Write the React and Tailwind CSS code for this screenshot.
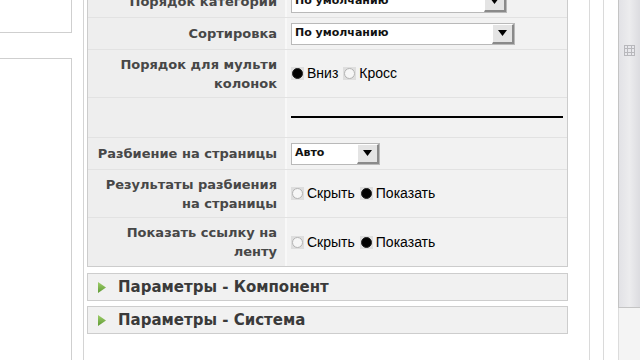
import React from 'react';

const labelFont = { fontFamily: '"DejaVu Sans", Verdana, sans-serif' };
const valueFont = { fontFamily: '"Liberation Sans", Arial, sans-serif' };

// old-style windows radio
const Radio = ({ checked }) => (
  <span className="w-[13px] h-[13px] bg-[#dedede] flex items-center justify-center shrink-0">
    <span
      className={`w-[11px] h-[11px] rounded-full border ${
        checked ? 'bg-black border-[#222]' : 'bg-[#f6f6f6] border-[#b4b4b4]'
      }`}
    />
  </span>
);

const RadioGroup = ({ options, value }) => (
  <div className="flex items-center text-[14px] text-black" style={valueFont}>
    {options.map((o, i) => (
      <div key={o} className={`flex items-center gap-[3px] ${i > 0 ? 'ml-[5px]' : ''}`}>
        <Radio checked={o === value} />
        <span>{o}</span>
      </div>
    ))}
  </div>
);

const Select = ({ value, width }) => (
  <div
    className="h-[22px] flex bg-white border border-[#b9b9b9]"
    style={{ width }}
  >
    <div
      className="flex-1 flex items-center pl-[3px] text-[11px] font-bold text-[#111]"
      style={labelFont}
    >
      {value}
    </div>
    <div className="w-[22px] bg-[#e4e4e4] border-t border-l border-white border-r-2 border-b-2 border-r-[#8a8a8a] border-b-[#8a8a8a] flex items-center justify-center">
      <svg width="9" height="6" viewBox="0 0 9 6">
        <path d="M0 0 H9 L4.5 6 Z" fill="#000" />
      </svg>
    </div>
  </div>
);

const Row = ({ label, height, last = false, children }) => (
  <div
    className={`grid grid-cols-[199px_1fr] ${last ? '' : 'border-b border-[#e2e2e2]'}`}
    style={{ height }}
  >
    <div
      className="bg-[#eeeeee] border-r-2 border-[#f8f8f8] flex items-center justify-end text-right pr-[8px] text-[13px] leading-[19px] font-bold text-[#474747]"
      style={labelFont}
    >
      <div>{label}</div>
    </div>
    <div className="bg-[#f2f2f2] flex items-center pl-[4px]">{children}</div>
  </div>
);

const SectionHeader = ({ title }) => (
  <div className="h-[28px] border border-[#cdcdcd] bg-[#f1f1f1] flex items-center pl-[10px] gap-[12px]">
    <svg width="8" height="11" viewBox="0 0 8 11">
      <defs>
        <linearGradient id="g" x1="0" y1="0" x2="0" y2="1">
          <stop offset="0" stopColor="#9fcf6a" />
          <stop offset="1" stopColor="#5f9a35" />
        </linearGradient>
      </defs>
      <path d="M0 0 L8 5.5 L0 11 Z" fill="url(#g)" />
    </svg>
    <span className="text-[15px] font-bold text-[#3a3a3a]" style={labelFont}>
      {title}
    </span>
  </div>
);

export default function App() {
  return (
    <div className="w-[640px] h-[360px] overflow-hidden bg-white flex">
      {/* left side boxes */}
      <div className="w-[72px] flex flex-col shrink-0">
        <div className="h-[33px] border-r border-b border-[#cfcfcf]" />
        <div className="h-[25px]" />
        <div className="flex-1 border-t border-r border-[#cfcfcf]" />
      </div>
      <div className="w-[11px] shrink-0" />
      <div className="w-[1px] bg-[#d4d4d4] shrink-0" />
      <div className="w-[3px] shrink-0" />

      {/* parameters panel */}
      <div className="w-[481px] shrink-0 flex flex-col -mt-[14px]">
        <div className="border border-[#cccccc] border-t-0 bg-[#f2f2f2]">
          <Row label="Порядок категории" height={32}>
            <Select value="По умолчанию" width={216} />
          </Row>
          <Row label="Сортировка" height={32}>
            <Select value="По умолчанию" width={224} />
          </Row>
          <Row label={<>Порядок для мульти<br />колонок</>} height={48}>
            <RadioGroup options={['Вниз', 'Кросс']} value="Вниз" />
          </Row>
          <Row label="" height={40}>
            <div className="w-[272px] h-[2px] bg-black -mt-[2px]" />
          </Row>
          <Row label="Разбиение на страницы" height={32}>
            <Select value="Авто" width={89} />
          </Row>
          <Row label={<>Результаты разбиения<br />на страницы</>} height={48}>
            <RadioGroup options={['Скрыть', 'Показать']} value="Показать" />
          </Row>
          <Row label={<>Показать ссылку на<br />ленту</>} height={48} last>
            <RadioGroup options={['Скрыть', 'Показать']} value="Показать" />
          </Row>
        </div>
        <div className="h-[6px]" />
        <SectionHeader title="Параметры - Компонент" />
        <div className="h-[5px]" />
        <SectionHeader title="Параметры - Система" />
      </div>

      <div className="w-[21px] shrink-0" />
      <div className="w-[1px] bg-[#dadada] shrink-0" />
      <div className="w-[13px] shrink-0" />
      <div className="w-[1px] bg-[#dadada] shrink-0" />
      <div className="w-[14px] shrink-0" />

      {/* scrollbar */}
      <div className="w-[22px] shrink-0 flex flex-col bg-[#f4f4f4]">
        <div className="h-[308px] border-l border-b border-[#c4c4c4] bg-gradient-to-r from-[#e2e2e6] via-[#ececee] to-[#dcdce0] flex flex-col items-center">
          <div className="mt-[45px] w-[11px] h-[11px] grid grid-cols-3 gap-[1px] p-[1px] bg-[#b8b8bc]">
            {Array.from({ length: 9 }).map((_, i) => (
              <div key={i} className="bg-[#e8e8ec]" />
            ))}
          </div>
        </div>
        <div className="flex-1 border-l border-[#dcdcdc]" />
      </div>
    </div>
  );
}
